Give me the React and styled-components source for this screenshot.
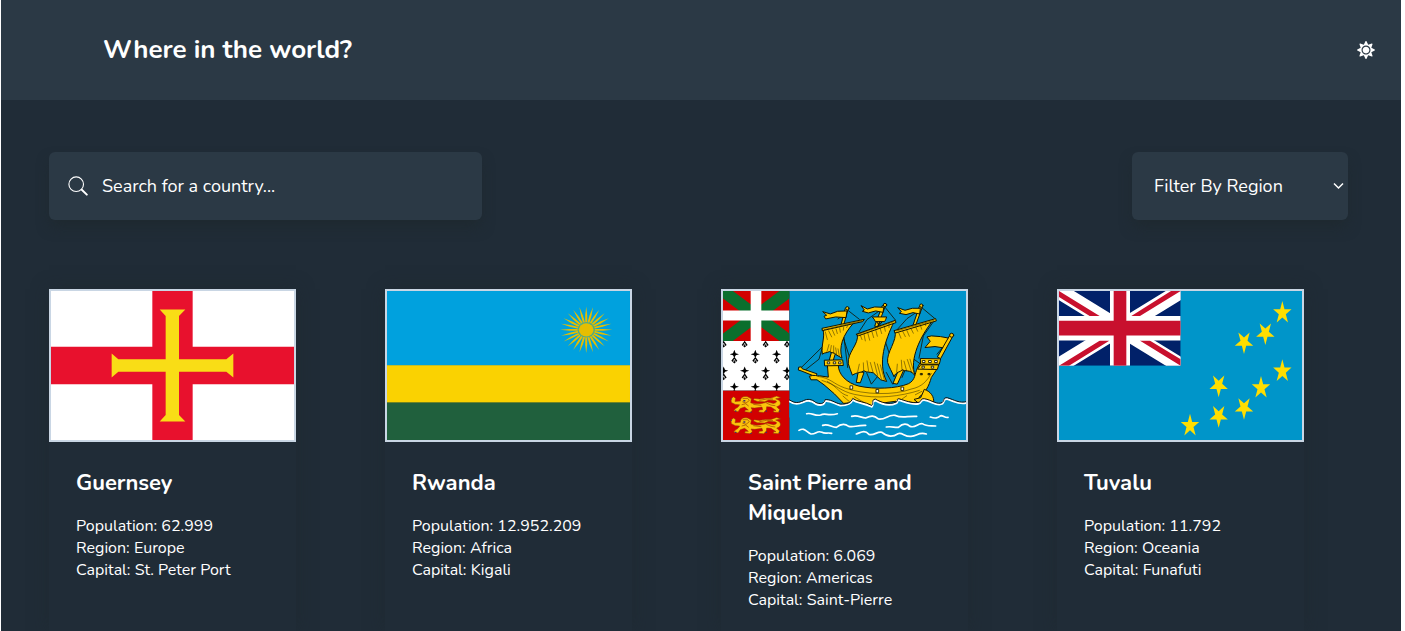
import React from "react";
import styled, { createGlobalStyle } from "styled-components";
import { FaSun } from "react-icons/fa";

const GlobalStyle = createGlobalStyle`
  *, *::before, *::after { box-sizing: border-box; }
  body {
    margin: 0;
    background: #fff;
    color: #fff;
    font-family: Nunito, Lato, "Open Sans", sans-serif;
  }
  input, select, button { font-family: inherit; color: inherit; }
`;

const Page = styled.div`
  min-height: 100vh;
  margin: 0 4px 0 1px;
  background: #202c37;
  overflow: hidden;
`;

const Header = styled.header`
  display: flex;
  align-items: center;
  justify-content: space-between;
  padding: 32px 26px 32px 102px;
  background: #2b3945;
`;

const Brand = styled.h1`
  margin: 0;
  font-size: 26px;
  line-height: 36px;
  font-weight: 700;
`;

const ThemeButton = styled.button`
  display: flex;
  padding: 0;
  border: 0;
  background: none;
  font-size: 18px;
  cursor: pointer;
`;

const Controls = styled.form`
  display: flex;
  justify-content: space-between;
  padding: 52px 53px 0 48px;
`;

const SearchBox = styled.label`
  display: flex;
  align-items: center;
  gap: 14px;
  width: 33.3%;
  height: 68px;
  padding: 0 19px;
  border-radius: 6px;
  background: #2b3945;
  box-shadow: 0 8px 14px -2px rgba(30, 40, 45, 0.8);
  svg { flex: none; }
`;

const SearchInput = styled.input`
  flex: 1;
  min-width: 0;
  padding: 0;
  border: 0;
  outline: 0;
  background: none;
  font-size: 18px;
  line-height: 24px;
  &::placeholder { color: #fff; opacity: 1; }
`;

const SelectBox = styled.div`
  display: grid;
  align-items: center;
  width: 216px;
  height: 68px;
  border-radius: 6px;
  background: #2b3945;
  box-shadow: 0 8px 14px -2px rgba(30, 40, 45, 0.8);
  > * { grid-area: 1 / 1; }
  svg {
    justify-self: end;
    margin-right: 4px;
    pointer-events: none;
  }
`;

const RegionSelect = styled.select`
  appearance: none;
  width: 100%;
  height: 100%;
  padding: 0 22px;
  border: 0;
  border-radius: 6px;
  background: none;
  font-size: 18px;
  option { background: #2b3945; }
`;

const CountryGrid = styled.main`
  display: grid;
  grid-template-columns: repeat(4, 1fr);
  gap: 89px;
  padding: 69px 97px 0 48px;
`;

const Card = styled.article`
  box-shadow: 0 0 16px rgba(30, 40, 45, 0.5);
`;

const FlagFrame = styled.div`
  border: 2px solid #c9d6e4;
  > svg { display: block; width: 100%; height: 149px; }
`;

const CardBody = styled.div`
  padding: 26px 26px 20px 27px;
`;

const CountryName = styled.h2`
  margin: 0 0 17px;
  font-size: 22px;
  line-height: 30px;
  font-weight: 700;
`;

const Facts = styled.ul`
  margin: 0;
  padding: 0;
  list-style: none;
  font-size: 16px;
  line-height: 22px;
`;

function SearchIcon() {
  return (
    <svg width="20" height="20" viewBox="0 0 20 20" fill="none" stroke="#fff" strokeLinecap="round" aria-hidden="true">
      <circle cx="8.2" cy="8.2" r="7.3" strokeWidth="1.1" />
      <path d="M13.8 13.8L18.8 18.6" strokeWidth="2" />
    </svg>
  );
}

function ChevronIcon() {
  return (
    <svg width="11" height="8" viewBox="0 0 11 8" fill="none" stroke="#fff" strokeWidth="1.5" aria-hidden="true">
      <path d="M1 1.5L5.5 6L10 1.5" />
    </svg>
  );
}

function Flag({ name, viewBox, children }) {
  return (
    <svg viewBox={viewBox} preserveAspectRatio="none" role="img" aria-label={`Flag of ${name}`}>
      {children}
    </svg>
  );
}

function GuernseyFlag() {
  return (
    <Flag name="Guernsey" viewBox="34 32 729 449">
      <path fill="#fff" d="M34 32h729v449H34z" />
      <path fill="#e8112d" d="M338 32h121v449H338zM34 200h729v113H34z" />
      <path
        fill="#f9dd16"
        d="M360 88H437L418 107V238H560L581 220V293L560 275H418V406L437 425H360L378 406V275H236L216 293V220L236 238H378V107z"
      />
    </Flag>
  );
}

const rays = Array.from({ length: 24 }, (_, i) => i * 15);

function RwandaFlag() {
  return (
    <Flag name="Rwanda" viewBox="34 32 727 449">
      <path fill="#00a1de" d="M34 32h727v225H34z" />
      <path fill="#fad201" d="M34 256h727v113H34z" />
      <path fill="#20603d" d="M34 368h727v113H34z" />
      <g transform="translate(630 149) scale(1 .9)" fill="#e5be01">
        {rays.map((a) => (
          <path key={a} transform={`rotate(${a})`} d="M24 -3L50 -3L78 0L50 3L24 3z" />
        ))}
        <circle r="26" fill="#55aa82" />
        <circle r="22" />
      </g>
    </Flag>
  );
}

const starPoints = Array.from({ length: 10 }, (_, i) => {
  const r = i % 2 ? 0.382 : 1;
  const a = (i * Math.PI) / 5;
  return `${(29 * r * Math.sin(a)).toFixed(1)},${(-36 * r * Math.cos(a)).toFixed(1)}`;
}).join(" ");

const tuvaluStars = [
  [696, 98, 0], [696, 274, 0], [632, 324, 0], [419, 438, 0],
  [645, 159, 180], [581, 186, 180], [505, 316, 180], [505, 408, 180], [581, 384, 180],
];

function TuvaluFlag() {
  return (
    <Flag name="Tuvalu" viewBox="26 32 729 449">
      <path fill="#0095c9" d="M26 32h729v449H26z" />
      <svg x="26" y="32" width="365" height="225" viewBox="26 32 365 225">
        <path fill="#012169" d="M26 32h365v225H26z" />
        <path stroke="#fff" strokeWidth="47" d="M26 32L391 257M391 32L26 257" />
        <path
          fill="#c8102e"
          d="M26 32L148 107H118L26 50zM391 32L269 107H243L362 32zM26 257L149 181H178L56 257zM391 257L268 181H298L391 238z"
        />
        <path fill="#fff" d="M179 32h60v225h-60zM26 107h365v74H26z" />
        <path fill="#c8102e" d="M190 32h38v225h-38zM26 122h365v44H26z" />
      </svg>
      {tuvaluStars.map(([x, y, r]) => (
        <polygon key={`${x}-${y}`} points={starPoints} fill="#ffde00" transform={`translate(${x} ${y}) rotate(${r})`} />
      ))}
    </Flag>
  );
}

const ermineSpots = [
  [25, 162], [88, 162], [151, 162], [215, 162],
  [57, 210], [120, 210], [184, 210],
  [25, 260], [88, 260], [151, 260], [215, 260],
  [57, 308], [120, 308], [184, 308],
];

function Ermine({ x, y }) {
  return (
    <g transform={`translate(${x} ${y})`}>
      <path d="M0 -13L4 -3L14 0L4 3L1 9L9 20L4 24L0 28L-4 24L-9 20L-1 9L-4 3L-14 0L-4 -3z" />
      <path fill="none" stroke="#fff" strokeWidth="2" d="M-4 24L0 15L4 24" />
    </g>
  );
}

function Lion({ y }) {
  return (
    <g transform={`translate(0 ${y})`}>
      <path
        fill="#fcc40b" stroke="#8a3a08" strokeWidth="1.5" strokeLinejoin="round"
        d="M47 9L55 3L61 8L59 17L75 16C75 5 84 0 97 3L108 9L106 21C120 27 139 24 156 19L174 23C185 22 187 15 178 14L160 13L148 18L126 17L114 12L117 8L133 10L149 7L167 7L184 1L196 6L181 9L192 14C200 25 192 31 184 33L193 42L189 50L174 49L175 44L182 44L167 34L154 33L153 42L145 50L130 49L132 43L142 42L140 34L118 37L107 36L111 43L105 50L88 48L90 43L99 43L88 34L75 38L68 48L55 45L60 39L68 34L73 27L60 26L48 20z"
      />
      <path fill="none" stroke="#943d08" strokeWidth="2" d="M82 8L97 8L102 14L92 22L81 18M79 27L91 24L100 31M153 22L167 28L180 30M114 26L138 29M132 14L153 10L173 10" />
      <path fill="#3b316d" d="M84 13h6v4h-6zM46 8h4v3h-4zM59 44h4v4h-4zM105 48h4v3h-4zM151 44h4v4h-4zM191 44h4v4h-4z" />
    </g>
  );
}

function Ship() {
  return (
    <g stroke="#161400" strokeWidth="3" strokeLinejoin="round" strokeLinecap="round">
      <g fill="none" strokeWidth="2.5">
        <path d="M46 252L112 187M58 259L101 225L112 187M126 250L140 220M185 76L222 105M185 84L158 104M296 65L330 107M296 70L245 106L221 143M407 68L450 104M407 75L365 103L333 139M169 145L193 220M187 250L176 160M286 130L316 220M350 280L376 218L409 242M244 266L258 300L284 268M303 265L322 300M448 107L414 155L401 222M500 156L455 210" />
      </g>
      <g fill="#fc0">
        <path d="M181 72L189 72L174 126L167 126zM292 64L300 65L277 127L269 126zM403 67L411 68L390 126L383 126z" />
        <path d="M140 202L151 205L143 231L132 231zM220 262L236 265L225 296L214 295zM342 255L355 258L336 300L324 298z" />
        <path d="M184 80L157 81L135 89L112 82L124 93L116 96L121 104L151 98L181 100zM294 69L268 68L246 74L227 64L237 77L231 81L249 86L271 80L292 84zM404 72L381 72L359 78L337 70L348 82L342 87L362 91L383 85L402 89z" />
        <circle cx="186" cy="72" r="5" /><circle cx="299" cy="62" r="5" /><circle cx="408" cy="64" r="5" />
        <path d="M113 136C120 159 107 180 111 210C118 204 126 207 132 202C139 207 147 204 153 212L170 222C160 190 171 153 205 116z" />
        <path d="M216 151C222 180 185 205 189 239C193 250 196 261 201 273C214 264 227 266 236 260C246 266 253 263 264 266L286 287L304 292C276 236 300 167 325 115z" />
        <path d="M329 142C337 168 302 206 307 235C311 249 320 263 326 278C332 262 342 266 351 257C360 262 371 258 380 265L390 275C370 226 407 154 440 112z" />
        <path d="M111 132L237 105L232 112L112 139zM213 150L330 108L332 115L221 154zM327 139L451 103L453 110L331 146z" />
        <path d="M262 98L304 98L301 106L298 112L270 112L267 106z" />
        <path d="M426 158L438 155L465 157L492 162L481 192L449 187L419 190L434 172z" />
        <path d="M496 151L503 155L466 223L457 219z" /><circle cx="499" cy="153" r="6" />
        <path d="M41 249L48 248L51 254L95 269L92 278L47 260L40 258z" />
        <path d="M73 276C87 270 95 277 103 275L129 279L126 240L159 242C158 270 184 297 221 306C266 316 333 314 369 299C391 288 388 268 396 252L404 236L455 240L452 259L438 280C431 306 418 329 403 337L394 357L343 350L305 355L256 365L205 355L175 358L147 329L116 302L95 287L78 287z" />
        <path d="M418 316C438 323 446 339 445 354L398 356L386 346L405 341z" />
        <path d="M118 228L172 227L174 244L119 245zM406 223L466 224L462 240L407 240zM407 242L460 242L456 256L398 255z" />
      </g>
      <g fill="none" strokeWidth="1.4">
        <path d="M98 277C135 281 145 300 177 311C237 333 328 334 377 315C411 308 424 291 438 268M110 289C154 302 166 322 208 331C276 346 344 337 402 319M126 292C160 311 161 328 187 335M173 336L195 355M207 338L239 357M364 335L340 352M390 332L409 322" />
        <path d="M120 143L126 166M130 140L139 158M141 137L148 153M152 134L156 148M163 131L165 144M175 128L174 138M188 122L184 130M225 153L230 166M236 150L240 170M247 145L253 168M259 140L265 160M271 136L276 156M284 131L289 148M297 126L300 141M311 119L311 130M340 145L347 162M352 141L360 157M364 137L372 156M377 133L384 147M391 128L397 141M405 122L409 135M420 116L421 124" />
        <path d="M125 202L131 181M135 202L138 184M145 206L145 185M154 212L151 191M162 216L158 194M217 263L222 240M235 259L234 236M250 262L245 230M263 264L255 235M277 274L267 234M288 284L276 239M297 287L285 242M334 263L336 240M350 257L348 228M364 260L356 231M379 265L366 226M387 269L374 225" />
        <path d="M117 136L230 109M219 150L326 112M334 140L446 108" />
      </g>
      <path d="M275 113L281 124L290 113M284 113L277 128" fill="none" />
      <g fill="#fff" strokeWidth="2.5">
        <path d="M127 233h6v6h-6zM145 233h6v6h-6zM161 233h6v6h-6zM412 229h7v6h-7zM431 229h7v6h-7zM449 229h7v6h-7zM411 246h6v6h-6zM439 246h6v6h-6zM195 305h7v10h-7zM273 316h7v10h-7zM348 309h7v10h-7z" />
        <path fill="#161400" d="M406 268h5v4h-5zM429 268h5v4h-5z" />
      </g>
    </g>
  );
}

const seaLine =
  "M12 351C29 363 40 360 54 354C67 347 79 349 91 359C103 365 117 364 119 351C134 348 148 360 165 364C185 364 197 361 202 347C216 358 238 356 259 368C267 360 256 352 270 349C287 359 312 367 332 358C342 354 330 349 341 348C361 354 378 362 399 359C411 356 403 347 417 348C439 351 455 368 471 359C479 352 472 344 486 345C507 351 522 363 545 356";

function MiquelonFlag() {
  return (
    <Flag name="Saint Pierre and Miquelon" viewBox="23 20 729 448">
      <path fill="#0093cb" d="M222 20h530v448H222z" />
      <svg x="23" y="20" width="199" height="150" viewBox="23 20 199 150">
        <path fill="#d20000" d="M23 20h199v150H23z" />
        <path stroke="#0b6f2d" strokeWidth="36" d="M23 20L222 170M222 20L23 170" />
        <path fill="#fff" d="M106 20h32v150h-32zM23 79h199v30H23z" />
      </svg>
      <svg x="23" y="170" width="199" height="150" viewBox="23 170 199 150">
        <path fill="#fff" d="M23 170h199v150H23z" />
        {ermineSpots.map(([x, y]) => <Ermine key={`${x}-${y}`} x={x} y={y} />)}
      </svg>
      <path fill="#d20000" d="M23 320h199v148H23z" />
      <Lion y={335} />
      <Lion y={399} />
      <g transform="translate(210 0)">
        <Ship />
        <path fill="#0093cb" d={`${seaLine}V400H12z`} />
        <path fill="none" stroke="#fff" strokeWidth="6" d={seaLine} />
        <path fill="none" stroke="#111" strokeWidth="3" transform="translate(0 -4)" d={seaLine} />
        <path
          fill="none" stroke="#fff" strokeWidth="5" strokeLinecap="round" strokeLinejoin="round"
          d="M64 389C80 385 88 397 106 393C119 385 128 397 156 389M199 397C217 392 224 400 241 402C258 394 265 394 280 405C301 408 308 390 330 394C351 404 365 395 394 397M435 399C451 404 456 402 466 395C474 394 478 402 488 400M112 424C128 418 137 429 153 430C168 418 178 418 190 427C206 431 212 423 241 424M303 429C318 426 327 431 339 430C351 419 363 417 374 427C391 433 397 417 411 419C423 428 434 425 451 426M41 439C58 429 62 444 77 450C93 451 95 438 110 445C119 450 127 445 139 448M213 450C229 444 238 437 251 451C266 456 276 441 290 445C304 457 321 460 338 449C351 444 358 459 377 457C397 456 399 443 423 450"
        />
      </g>
    </Flag>
  );
}

const countries = [
  { name: "Guernsey", population: "62.999", region: "Europe", capital: "St. Peter Port", Art: GuernseyFlag },
  { name: "Rwanda", population: "12.952.209", region: "Africa", capital: "Kigali", Art: RwandaFlag },
  { name: "Saint Pierre and Miquelon", population: "6.069", region: "Americas", capital: "Saint-Pierre", Art: MiquelonFlag },
  { name: "Tuvalu", population: "11.792", region: "Oceania", capital: "Funafuti", Art: TuvaluFlag },
];

export default function App() {
  return (
    <Page>
      <GlobalStyle />
      <Header>
        <Brand>Where in the world?</Brand>
        <ThemeButton type="button" aria-label="Switch theme"><FaSun /></ThemeButton>
      </Header>
      <Controls onSubmit={(e) => e.preventDefault()}>
        <SearchBox>
          <SearchIcon />
          <SearchInput type="text" placeholder="Search for a country..." aria-label="Search for a country" />
        </SearchBox>
        <SelectBox>
          <RegionSelect aria-label="Filter By Region" defaultValue="">
            <option value="">Filter By Region</option>
            <option>Africa</option>
            <option>Americas</option>
            <option>Asia</option>
            <option>Europe</option>
            <option>Oceania</option>
          </RegionSelect>
          <ChevronIcon />
        </SelectBox>
      </Controls>
      <CountryGrid>
        {countries.map(({ name, population, region, capital, Art }) => (
          <Card key={name}>
            <FlagFrame><Art /></FlagFrame>
            <CardBody>
              <CountryName>{name}</CountryName>
              <Facts>
                <li>Population: {population}</li>
                <li>Region: {region}</li>
                <li>Capital: {capital}</li>
              </Facts>
            </CardBody>
          </Card>
        ))}
      </CountryGrid>
    </Page>
  );
}
